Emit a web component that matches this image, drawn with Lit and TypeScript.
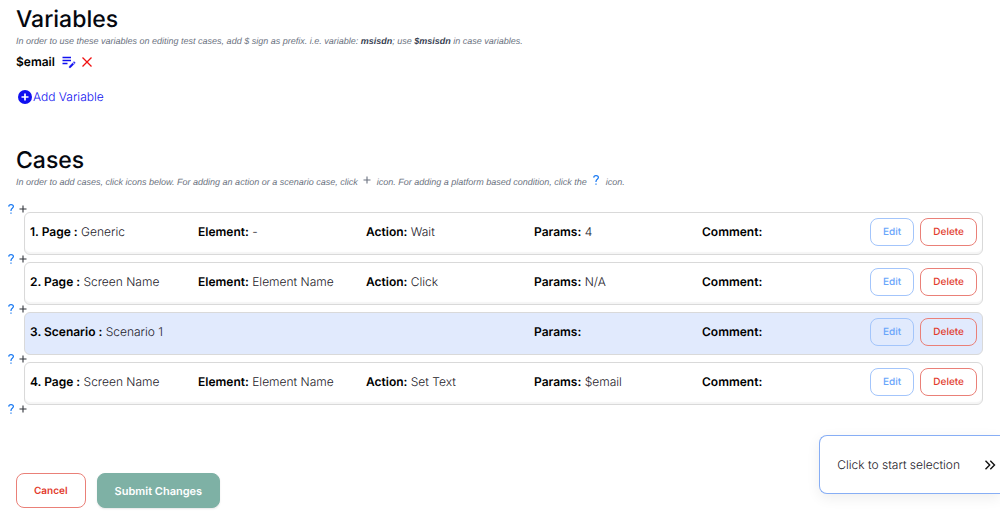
import { LitElement, html, css, svg } from "lit";
import { customElement, property, state } from "lit/decorators.js";

interface TestCase {
  kind: "Page" | "Scenario";
  name: string;
  element?: string;
  action?: string;
  params: string;
  comment: string;
}

const plusIcon = html`<svg viewBox="0 0 10 10" width="10" height="10" fill="none" stroke="currentColor" stroke-width="1.1" aria-hidden="true">
  ${svg`<path d="M5 1.500v7M1.500 5h7" />`}
</svg>`;

const questionIcon = html`<svg viewBox="0 0 10 10" width="10" height="10" fill="none" stroke="currentColor" stroke-width="1.2" aria-hidden="true">
  ${svg`<path d="M2.700 2.600C2.800 1.200 3.800.6 5 .6c1.400 0 2.400.8 2.400 2C7.400 4.300 5 4.300 5 6.400v.6" /><path d="M5 8.400v1.400" />`}
</svg>`;

@customElement("insert-bar")
export class InsertBar extends LitElement {
  static styles = css`
    :host {
      display: flex;
      align-items: center;
      gap: 2px;
      height: 7px;
      padding-left: 6px;
    }
    button {
      display: flex;
      padding: 0;
      border: 0;
      background: none;
      color: #30343b;
      cursor: pointer;
    }
    .condition {
      color: #1677f2;
    }
  `;

  render() {
    return html`
      <button class="condition" type="button" aria-label="Add condition">${questionIcon}</button>
      <button type="button" aria-label="Add case">${plusIcon}</button>
    `;
  }
}

@customElement("case-row")
export class CaseRow extends LitElement {
  @property({ type: Number }) number = 1;
  @property({ attribute: false }) data!: TestCase;

  static styles = css`
    :host {
      display: block;
      margin: 0 17px 0 24px;
    }
    .card {
      box-sizing: border-box;
      display: grid;
      grid-template-columns: repeat(5, 1fr) 107px;
      min-height: 43px;
      padding: 5px;
      border: 1px solid #d9d9d9;
      border-radius: 6px;
      background: #fff;
      box-shadow: inset 0 -2px 1px #f5f5f5;
    }
    .card.scenario {
      background: #e1eafd;
      box-shadow: none;
    }
    .field {
      padding-top: 5px;
      line-height: 18px;
      white-space: nowrap;
    }
    .scenario .field:first-child {
      grid-column: span 3;
    }
    b {
      font-weight: 600;
      color: #000;
    }
    .actions {
      display: flex;
      justify-content: space-between;
      align-items: flex-start;
    }
    button {
      box-sizing: border-box;
      height: 28px;
      padding: 0 12px;
      border: 1px solid currentColor;
      border-radius: 8px;
      background: transparent;
      font: 500 10px/16px Inter, sans-serif;
      text-rendering: inherit;
      cursor: pointer;
    }
    .edit {
      color: #69a5fb;
      border-color: #a3c5fb;
    }
    .delete {
      color: #e23a2c;
      border-color: #ea8078;
    }
  `;

  render() {
    const c = this.data;
    const scenario = c.kind === "Scenario";
    return html`
      <div class="card ${scenario ? "scenario" : ""}">
        <div class="field"><b>${this.number}. ${c.kind} :</b> ${c.name}</div>
        ${scenario
          ? null
          : html`<div class="field"><b>Element:</b> ${c.element}</div>
              <div class="field"><b>Action:</b> ${c.action}</div>`}
        <div class="field"><b>Params:</b> ${c.params}</div>
        <div class="field"><b>Comment:</b> ${c.comment}</div>
        <div class="actions">
          <button class="edit" type="button">Edit</button>
          <button class="delete" type="button">Delete</button>
        </div>
      </div>
    `;
  }
}

@customElement("app-root")
export class AppRoot extends LitElement {
  @state() private cases: TestCase[] = [
    { kind: "Page", name: "Generic", element: "-", action: "Wait", params: "4", comment: "" },
    { kind: "Page", name: "Screen Name", element: "Element Name", action: "Click", params: "N/A", comment: "" },
    { kind: "Scenario", name: "Scenario 1", params: "", comment: "" },
    { kind: "Page", name: "Screen Name", element: "Element Name", action: "Set Text", params: "$email", comment: "" },
  ];

  static styles = css`
    :host {
      display: block;
      position: relative;
      padding: 4px 0 10px;
      background: #fff;
      color: #1d2129;
      font: 300 12px/18px Inter, sans-serif;
      text-rendering: geometricPrecision;
    }
    button {
      text-rendering: inherit;
    }
    .section,
    .footer {
      padding: 0 16px;
    }
    h1 {
      margin: 0;
      color: #05080f;
      font-size: 23px;
      line-height: 30px;
      font-weight: 500;
    }
    .hint {
      margin: 0;
      color: #6b7280;
      font: italic 400 9px/14px "Liberation Sans", sans-serif;
    }
    .hint b {
      color: #374151;
      font-weight: 700;
    }
    .hint svg {
      margin: 0 2px;
      vertical-align: 0;
    }
    .hint .blue {
      color: #1677f2;
    }
    .variable {
      display: flex;
      align-items: center;
      gap: 4px;
      margin-top: 5px;
    }
    .variable b {
      margin-right: 3px;
      color: #000;
      font-weight: 600;
    }
    .icon {
      display: flex;
      padding: 0;
      border: 0;
      background: none;
      cursor: pointer;
    }
    .add {
      display: flex;
      align-items: center;
      gap: 1px;
      margin-top: 17px;
      padding: 0;
      border: 0;
      background: none;
      color: #1010f0;
      font: inherit;
      cursor: pointer;
    }
    .cases {
      margin-top: 39px;
    }
    .list {
      margin-top: 16px;
    }
    .footer {
      display: flex;
      gap: 11px;
      margin-top: 61px;
    }
    .btn {
      box-sizing: border-box;
      height: 35px;
      border: 1px solid #ea8078;
      border-radius: 8px;
      background: #fff;
      color: #e23a2c;
      padding: 0 17px;
      font: 600 10px/16px Inter, sans-serif;
      cursor: pointer;
    }
    .submit {
      border-color: #7eb1a5;
      background: #7eb1a5;
      color: #fff;
      font-size: 11px;
      box-shadow: 0 1px 2px #0000001a;
    }
    .picker {
      position: absolute;
      right: 0;
      bottom: 24px;
      display: flex;
      align-items: center;
      gap: 24px;
      height: 59px;
      box-sizing: border-box;
      padding: 0 4px 0 17px;
      border: 1px solid #87aef5;
      border-right: 0;
      border-radius: 8px 0 0 8px;
      background: #fff;
      color: inherit;
      font: inherit;
      box-shadow: 0 4px 14px #00000012;
      cursor: pointer;
    }
  `;

  render() {
    return html`
      <section class="section">
        <h1>Variables</h1>
        <p class="hint">
          In order to use these variables on editing test cases, add $ sign as prefix. i.e. variable: <b>msisdn</b>; use
          <b>$msisdn</b> in case variables.
        </p>
        <div class="variable">
          <b>$email</b>
          <button class="icon" type="button" aria-label="Edit variable">
            <svg viewBox="0 0 14 14" width="14" height="14" fill="none" stroke="#1010f0" stroke-width="1.300">
              <path d="M.5 2.500h8.500M.5 5.500h8.500M.5 8.500h5" />
              <path d="M7.200 12.700v-1.300l3.400-3.400 1.300 1.300-3.400 3.400z" fill="#1010f0" stroke-width="0.400" />
              <path d="M11.300 7.300l.7-.7 1.300 1.300-.7.7z" fill="#1010f0" stroke-width="0.400" />
            </svg>
          </button>
          <button class="icon" type="button" aria-label="Remove variable">
            <svg viewBox="0 0 14 14" width="14" height="14" fill="none" stroke="#f01010" stroke-width="1.300">
              <path d="M2.500 2.500l9 9M11.500 2.500l-9 9" />
            </svg>
          </button>
        </div>
        <button class="add" type="button">
          <svg viewBox="0 0 16 16" width="16" height="16" aria-hidden="true">
            <circle cx="9" cy="8" r="7" fill="#1010f0" />
            <path d="M9 4.500v7M5.500 8h7" stroke="#fff" stroke-width="1.700" />
          </svg>
          Add Variable
        </button>
      </section>

      <section class="cases">
        <div class="section">
          <h1>Cases</h1>
          <p class="hint">
            In order to add cases, click icons below. For adding an action or a scenario case, click
            ${plusIcon} icon. For adding a platform based condition, click the
            <span class="blue">${questionIcon}</span> icon.
          </p>
        </div>
        <div class="list">
          <insert-bar></insert-bar>
          ${this.cases.map(
            (c, i) => html`<case-row .number=${i + 1} .data=${c}></case-row><insert-bar></insert-bar>`
          )}
        </div>
      </section>

      <div class="footer">
        <button class="btn" type="button">Cancel</button>
        <button class="btn submit" type="button">Submit Changes</button>
      </div>

      <button class="picker" type="button">
        Click to start selection
        <svg viewBox="0 0 12 12" width="12" height="12" fill="none" stroke="#111" stroke-width="1.400" aria-hidden="true">
          <path d="M1.500 1.800L5.700 6l-4.200 4.200M6.300 1.800L10.500 6l-4.200 4.200" />
        </svg>
      </button>
    `;
  }
}
